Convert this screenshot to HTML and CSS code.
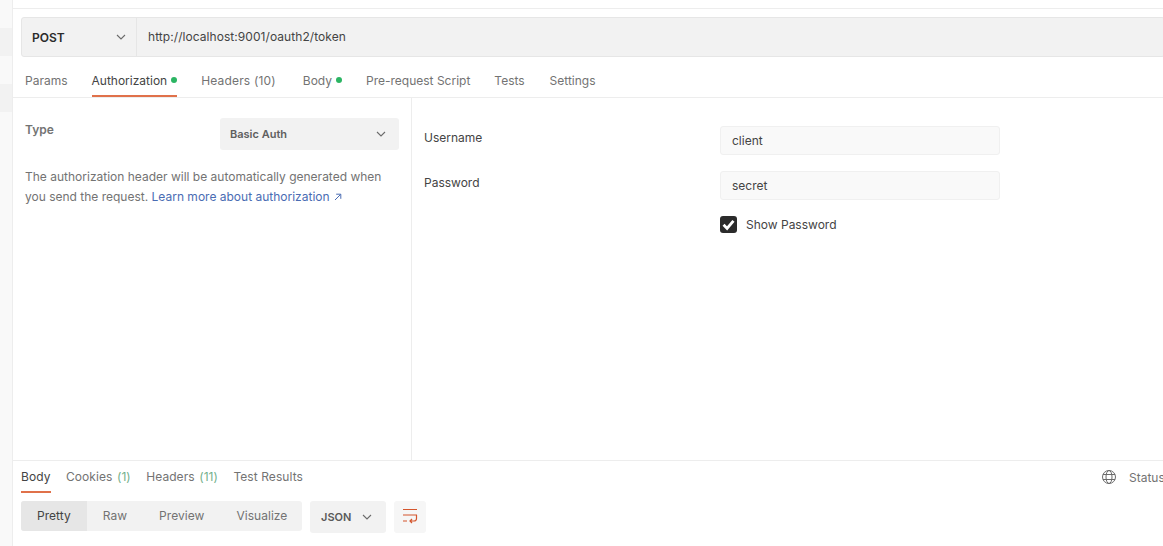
FILE: index.html
```html
<!DOCTYPE html>
<html lang="en">

<head>
 <meta charset="UTF-8">
 <meta name="viewport" content="width=device-width">
 <title>Authorization</title>
 <link rel="stylesheet" href="styles.css">
</head>

<body>

 <!-- Sidebar cortado -->
 <aside class="sidebar">
  <div class="sidebar-item"></div>
  <div class="sidebar-item"></div>
 </aside>

 <main class="main">

  <div class="top-strip"></div>

  <div class="request-bar">
   <div class="method">
    <span>POST</span>
    <svg class="chevron" viewBox="0 0 10 6"><path d="M1 1l4 4 4-4"/></svg>
   </div>
   <div class="url">http://localhost:9001/oauth2/token</div>
  </div>

  <nav class="tabs">
   <a class="tab">Params</a>
   <a class="tab tab-active">Authorization<i class="dot"></i></a>
   <a class="tab tab-headers">Headers (10)</a>
   <a class="tab tab-body">Body<i class="dot"></i></a>
   <a class="tab">Pre-request Script</a>
   <a class="tab">Tests</a>
   <a class="tab tab-settings">Settings</a>
  </nav>

  <section class="auth">
   <div class="auth-left">
    <div class="type-row">
     <span class="type-label">Type</span>
     <div class="type-select">
      <span>Basic Auth</span>
      <svg class="chevron" viewBox="0 0 10 6"><path d="M1 1l4 4 4-4"/></svg>
     </div>
    </div>
    <p class="help">
     The authorization header will be automatically generated when
     you send the request. <a class="link">Learn more about authorization <svg class="arrow" viewBox="0 0 8 8"><path d="M1 7l5.5-5.5M2.2 1.2h4.6v4.6"/></svg></a>
    </p>
   </div>
   <div class="auth-right">
    <div class="field">
     <label class="field-label">Username</label>
     <div class="field-input">client</div>
    </div>
    <div class="field">
     <label class="field-label">Password</label>
     <div class="field-input">secret</div>
    </div>
    <div class="show-row">
     <span class="checkbox">
      <svg viewBox="0 0 12 12"><path d="M2.5 6.2l2.5 2.6 4.5-5.4"/></svg>
     </span>
     <span>Show Password</span>
    </div>
   </div>
  </section>

  <section class="response">
   <div class="response-head">
    <nav class="res-tabs">
     <a class="res-tab res-tab-active">Body</a>
     <a class="res-tab">Cookies <em>(1)</em></a>
     <a class="res-tab">Headers <em>(11)</em></a>
     <a class="res-tab">Test Results</a>
    </nav>
    <div class="status">
     <svg class="globe" viewBox="0 0 16 16">
      <circle cx="8" cy="8" r="6.5"/>
      <ellipse cx="8" cy="8" rx="3" ry="6.5"/>
      <path d="M2 5.5h12M2 10.5h12"/>
     </svg>
     <span>Status</span>
    </div>
   </div>
   <div class="toolbar">
    <div class="segments">
     <span class="segment segment-active">Pretty</span>
     <span class="segment">Raw</span>
     <span class="segment">Preview</span>
     <span class="segment">Visualize</span>
    </div>
    <div class="format">
     <span>JSON</span>
     <svg class="chevron" viewBox="0 0 10 6"><path d="M1 1l4 4 4-4"/></svg>
    </div>
    <div class="wrap-btn">
     <svg viewBox="0 0 16 16"><path d="M1 .5h14M1 6h14M1 12h4M14.5 6v3.5a2.5 2.5 0 0 1-2.5 2.5H8M10 10l-2 2 2 2"/></svg>
    </div>
   </div>
  </section>

 </main>

</body>

</html>
```

FILE: styles.css
```css
/* Configuración básica */
* {
    margin: 0;
    padding: 0;
    box-sizing: border-box;
}

html, body {
    height: 100%;
    overflow: hidden;
}

body {
    display: flex;
    background-color: #ffffff;
    color: #5a5a5a;
    font-family: Inter, 'Liberation Sans', sans-serif;
    font-size: 12px;
}

/* Sidebar */
.sidebar {
    flex: 0 0 13px;
    padding-top: 28px;
    background-color: #f9f9f9;
    border-right: 1px solid #ededed;
}

.sidebar-item {
    height: 28px;
    margin-bottom: 28px;
    background-color: #f2f2f2;
}

/* Zona principal */
.main {
    flex: 1;
    min-width: 0;
    display: flex;
    flex-direction: column;
}

.top-strip {
    flex: 0 0 9px;
    border-bottom: 1px solid #ededed;
}

/* Barra de petición */
.request-bar {
    flex: 0 0 40px;
    display: flex;
    margin: 8px -2px 0 8px;
    background-color: #f2f2f2;
    border: 1px solid #e6e6e6;
    border-radius: 3px;
}

.method {
    flex: 0 0 115px;
    display: flex;
    align-items: center;
    justify-content: space-between;
    padding: 0 10px 0 10px;
    border-right: 1px solid #e6e6e6;
    color: #2b2b2b;
    font-weight: 600;
}

.url {
    padding-left: 11px;
    line-height: 37px;
    letter-spacing: 0.06px;
    color: #444444;
}

.chevron {
    width: 10px;
    height: 6px;
    fill: none;
    stroke: #6b6b6b;
    stroke-width: 1.1;
}

/* Pestañas de la petición */
.tabs {
    flex: 0 0 41px;
    display: flex;
    gap: 24px;
    padding-left: 12px;
    border-bottom: 1px solid #ededed;
}

.tab {
    display: flex;
    align-items: center;
    height: 40px;
    padding-top: 6px;
    color: #737373;
}

.tab-active {
    color: #444444;
    box-shadow: inset 0 -2px 0 #e0714a;
}

.tab-headers {
    letter-spacing: 0.17px;
}

.tab-body {
    margin-left: 3px;
}

.tab-settings {
    margin-left: 1px;
}

.dot {
    width: 6px;
    height: 6px;
    margin-left: 4px;
    border-radius: 50%;
    background-color: #2bb563;
}

/* Autorización */
.auth {
    flex: 1;
    min-height: 0;
    display: flex;
}

.auth-left {
    flex: 0 0 399px;
    padding: 20px 12px 0 12px;
    border-right: 1px solid #ededed;
}

.type-row {
    display: flex;
    align-items: flex-start;
    justify-content: space-between;
}

.type-label {
    margin-top: 4px;
    color: #737373;
    font-weight: 600;
}

.type-select {
    width: 179px;
    height: 32px;
    display: flex;
    align-items: center;
    justify-content: space-between;
    padding: 0 13px 0 10px;
    border-radius: 3px;
    background-color: #f2f2f2;
    color: #5f5f5f;
    font-size: 11px;
    font-weight: 600;
}

.help {
    margin-top: 17px;
    line-height: 20px;
    color: #737373;
}

.link {
    color: #4a6cb3;
}

.arrow {
    width: 8px;
    height: 8px;
    margin-left: 1px;
    fill: none;
    stroke: #4a6cb3;
    stroke-width: 1;
}

.auth-right {
    flex: 1;
    padding: 28px 0 0 12px;
    color: #444444;
}

.field {
    display: grid;
    grid-template-columns: 296px 280px;
    margin-bottom: 16px;
}

.field-label {
    line-height: 24px;
}

.field-input {
    height: 29px;
    padding-left: 11px;
    line-height: 27px;
    background-color: #f9f9f9;
    border: 1px solid #f0f0f0;
    border-radius: 3px;
}

.show-row {
    display: flex;
    align-items: center;
    gap: 9px;
    margin-left: 296px;
    margin-top: 4px;
}

.checkbox {
    width: 17px;
    height: 17px;
    border-radius: 3px;
    background-color: #2b2b2b;
}

.checkbox svg {
    display: block;
    width: 17px;
    height: 17px;
    fill: none;
    stroke: #ffffff;
    stroke-width: 2;
}

/* Respuesta */
.response {
    flex: 0 0 86px;
    border-top: 1px solid #ededed;
}

.response-head {
    display: flex;
    justify-content: space-between;
    height: 32px;
}

.res-tabs {
    display: flex;
    gap: 15.4px;
    padding-left: 8px;
}

.res-tab {
    height: 32px;
    line-height: 31px;
    letter-spacing: 0.08px;
    color: #737373;
}

.res-tab em {
    margin-left: 1px;
    font-style: normal;
    color: #73b08c;
}

.res-tab-active {
    color: #444444;
    box-shadow: inset 0 -2px 0 #e0714a;
}

.status {
    display: flex;
    align-items: center;
    gap: 12px;
    width: 62px;
    color: #737373;
    overflow: hidden;
    white-space: nowrap;
}

.globe {
    flex: none;
    width: 16px;
    height: 16px;
    fill: none;
    stroke: #6b6b6b;
    stroke-width: 1;
}

.toolbar {
    display: flex;
    align-items: flex-start;
    margin: 8px 0 0 8px;
}

.segments {
    display: flex;
    width: 281px;
    height: 30px;
    border-radius: 3px;
    overflow: hidden;
    background-color: #f2f2f2;
    color: #737373;
    letter-spacing: 0.04px;
}

.segment {
    padding: 0 16px;
    line-height: 29px;
}

.segment-active {
    background-color: #e6e6e6;
    color: #444444;
}

.format {
    width: 76px;
    height: 32px;
    display: flex;
    align-items: center;
    justify-content: space-between;
    margin-left: 8px;
    padding: 0 14px 0 11px;
    border-radius: 3px;
    background-color: #f2f2f2;
    font-size: 11px;
    font-weight: 600;
}

.wrap-btn {
    width: 32px;
    height: 32px;
    display: flex;
    align-items: center;
    justify-content: center;
    margin-left: 8px;
    border-radius: 3px;
    background-color: #f6f6f6;
}

.wrap-btn svg {
    width: 16px;
    height: 16px;
    fill: none;
    stroke: #d4552d;
    stroke-width: 1.2;
}
```
